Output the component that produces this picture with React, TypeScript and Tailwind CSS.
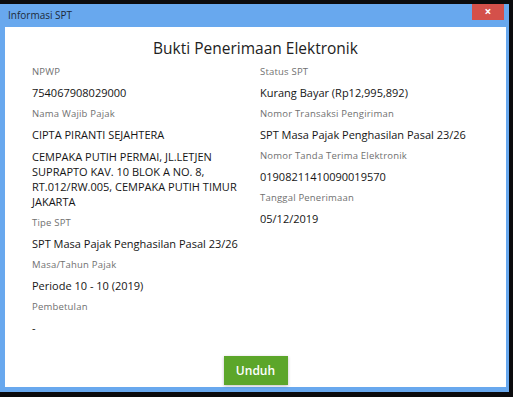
const font = {fontFamily: '"Open Sans", "Noto Sans", sans-serif'};

function Label({children}: {children: React.ReactNode}) {
  return <p className="text-[9.5px] leading-[14px] tracking-[0.2px] text-[#707070]">{children}</p>;
}

function Field({label, value}: {label: string; value: React.ReactNode}) {
  return (
    <div>
      <Label>{label}</Label>
      <p className="mt-[6px] mb-[6px] text-[11px] leading-[16px] text-[#151515]">{value}</p>
    </div>
  );
}

export default function App() {
  return (
    <div className="h-[397px] w-[513px] overflow-hidden bg-[#0b0b0d] pt-[4px]" style={font}>
      <div className="flex h-[388px] w-[509px] flex-col bg-[#68a8ee] px-[5px] pb-[5px] pr-[3px]">
        <div className="relative flex h-[23px] shrink-0 items-center">
          <span className="pl-[3px] text-[10px] text-[#1d2a3a]">Informasi SPT</span>
          <div className="absolute right-[2px] top-0 flex h-[16px] w-[32px] items-center justify-center bg-[#d4504a] text-[12px] font-bold leading-none text-white">
            ×
          </div>
        </div>
        <div className="flex flex-1 flex-col bg-white px-[27px] pt-[9px]">
          <h1 className="text-center text-[15.5px] leading-[24px] text-[#222]">Bukti Penerimaan Elektronik</h1>
          <div className="mt-[5px] grid grid-cols-[228px_1fr]">
            <div>
              <Field label="NPWP" value="754067908029000" />
              <Label>Nama Wajib Pajak</Label>
              <p className="mt-[6px] text-[11px] leading-[16px] text-[#151515]">CIPTA PIRANTI SEJAHTERA</p>
              <p className="mt-[6px] mb-[7px] w-[210px] text-[11px] leading-[15px] text-[#151515]">
                CEMPAKA PUTIH PERMAI, JL.LETJEN SUPRAPTO KAV. 10 BLOK A NO. 8, RT.012/RW.005, CEMPAKA PUTIH TIMUR JAKARTA
              </p>
              <Field label="Tipe SPT" value="SPT Masa Pajak Penghasilan Pasal 23/26" />
              <Field label="Masa/Tahun Pajak" value="Periode 10 - 10 (2019)" />
              <Field label="Pembetulan" value="-" />
            </div>
            <div>
              <Field label="Status SPT" value="Kurang Bayar (Rp12,995,892)" />
              <Field label="Nomor Transaksi Pengiriman" value="SPT Masa Pajak Penghasilan Pasal 23/26" />
              <Field label="Nomor Tanda Terima Elektronik" value="01908211410090019570" />
              <Field label="Tanggal Penerimaan" value="05/12/2019" />
            </div>
          </div>
          <div className="mt-[14px] flex justify-center">
            <button className="h-[29px] w-[64px] bg-[#5ca62a] text-[12px] font-semibold text-white shadow-[0_1px_3px_rgba(0,0,0,0.25)]">
              Unduh
            </button>
          </div>
        </div>
      </div>
    </div>
  );
}
